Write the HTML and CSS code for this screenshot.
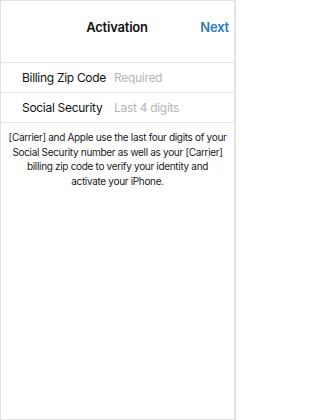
FILE: index.html
```html
<!DOCTYPE html>
<html>
<head>
<meta charset="utf-8">
<link rel="stylesheet" href="styles.css">
</head>
<body>
<div class="screen">
  <header class="nav">
    <div class="nav-side"></div>
    <div class="nav-title">Activation</div>
    <div class="nav-side nav-next">Next</div>
  </header>
  <div class="form">
    <div class="row">
      <span class="label">Billing Zip Code</span>
      <span class="placeholder">Required</span>
    </div>
    <div class="row">
      <span class="label">Social Security</span>
      <span class="placeholder">Last 4 digits</span>
    </div>
  </div>
  <p class="note">[Carrier] and Apple use the last four digits of your<br>Social Security number as well as your [Carrier]<br>billing zip code to verify your identity and<br>activate your iPhone.</p>
</div>
</body>
</html>
```
FILE: styles.css
```css
html, body {
  margin: 0;
  padding: 0;
  background: #fff;
}
.screen {
  box-sizing: border-box;
  width: 236px;
  height: 420px;
  border: 1px solid #e3e3e3;
  border-right-width: 2px;
  font-family: Inter, "Noto Sans", sans-serif;
  color: #111;
  overflow: hidden;
}
.nav {
  height: 62px;
  box-sizing: border-box;
  border-bottom: 1px solid #e6e6e6;
  display: flex;
  align-items: center;
  padding: 0 4px 9px 4px;
}
.nav-side {
  width: 40px;
}
.nav-title {
  flex: 1;
  text-align: center;
  font-size: 13px;
  font-weight: 600;
  letter-spacing: -0.2px;
}
.nav-next {
  text-align: right;
  color: #2e7ac2;
  font-size: 13px;
  font-weight: 600;
  letter-spacing: -0.2px;
  padding-right: 1px;
}
.row {
  height: 30px;
  box-sizing: border-box;
  border-bottom: 1px solid #e6e6e6;
  display: flex;
  align-items: center;
  padding-left: 21px;
  font-size: 12px;
  letter-spacing: -0.3px;
  white-space: nowrap;
}
.label {
  flex: none;
  width: 92px;
}
.placeholder {
  color: #b5b5b5;
}
.note {
  margin: 7px 0 0 0;
  padding: 0 4px;
  text-align: center;
  font-size: 10px;
  letter-spacing: -0.32px;
  line-height: 14.6px;
  color: #1a1a1a;
  white-space: nowrap;
}
```
